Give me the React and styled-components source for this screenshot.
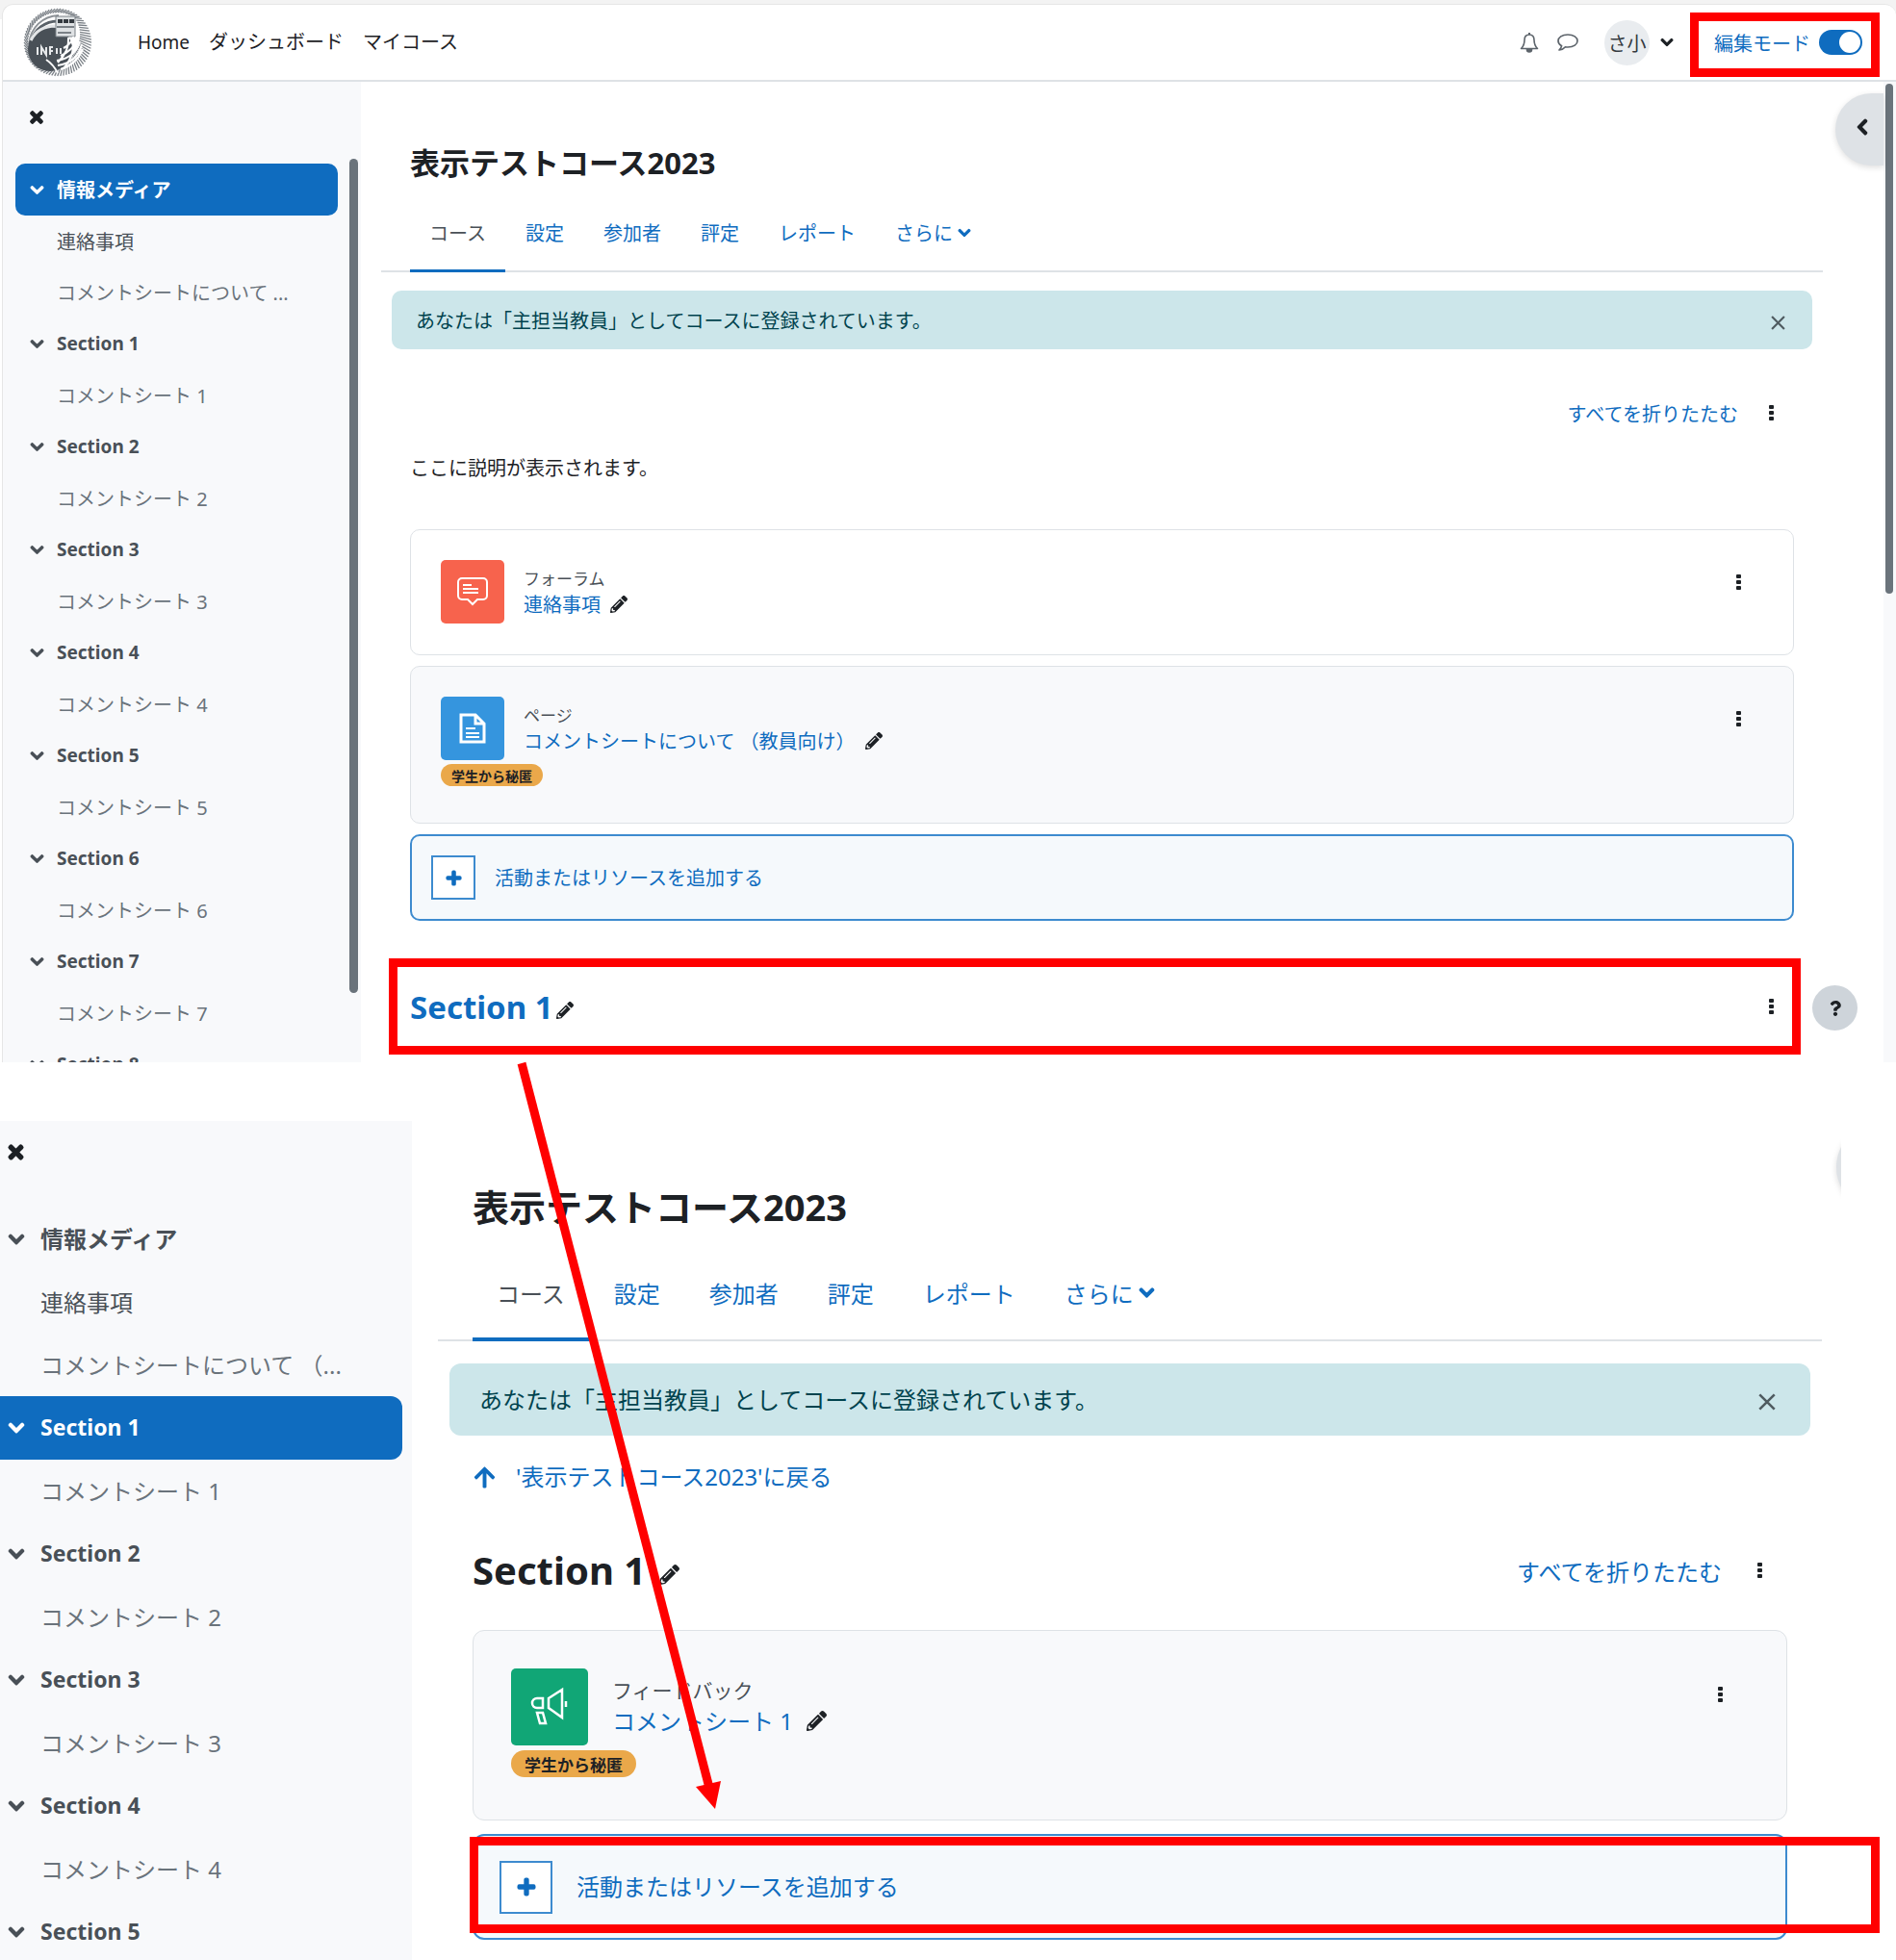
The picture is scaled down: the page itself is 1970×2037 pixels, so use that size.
import React, { useState } from "react";
import styled, { createGlobalStyle, css, ThemeProvider } from "styled-components";
import { FaTimes, FaChevronDown, FaChevronLeft, FaPencilAlt, FaPlus, FaArrowUp, FaQuestion } from "react-icons/fa";

const compact = {
  text: 20, latin: 19, small: 17, badge: 14, title: 31, section: 33, icon: 15, pencil: 19, lift: 1,
  titleTop: 60, titleLine: 48, titleGap: 10,
  tabPad: 20, tabHeight: 80, tabBar: 3, mainLeft: 21, mainRight: 63, bodyPad: 30,
  alertGap: 19, alertSide: 11, alertHeight: 61, alertPad: 25, alertRight: 28,
  cardPad: 31, cardBottom: 32, cardGap: 11, cardMenuPad: 40, menuHeight: 46, tile: 66, tileGap: 20, line: 27,
  badgeHeight: 23, badgePad: 11, badgeTop: 4, pencilGap: 10,
  addHeight: 90, addPad: 20, plus: 46, addGap: 20,
  menuRight: 7, menuGap: 19,
  navWidth: 372, navTop: 85, navClose: 37, navSide: 13, navRight: 24, navIcon: 15, navText: 43,
  rowTitle: 54, rowItem: 53, radius: 10,
};

const large = {
  text: 24, latin: 23, small: 21, badge: 17, title: 38, section: 40, icon: 18, pencil: 22, lift: 3,
  titleTop: 60, titleLine: 58, titleGap: 13,
  tabPad: 25, tabHeight: 98, tabBar: 4, mainLeft: 27, mainRight: 20, bodyPad: 36,
  alertGap: 23, alertSide: 12, alertHeight: 75, alertPad: 31, alertRight: 36,
  cardPad: 39, cardBottom: 38, cardGap: 14, cardMenuPad: 52, menuHeight: 54, tile: 80, tileGap: 25, line: 32,
  badgeHeight: 28, badgePad: 14, badgeTop: 5, pencilGap: 14,
  addHeight: 110, addPad: 26, plus: 55, addGap: 25,
  menuRight: 12, menuGap: 24,
  navWidth: 428, navTop: 90, navClose: 32, navSide: 0, navRight: 10, navIcon: 8, navText: 42,
  rowTitle: 66, rowItem: 65, radius: 12,
};

const px = (key) => ({ theme }) => `${theme[key]}px`;

const heavyIcon = css`
  > svg { stroke-width: 40px; }
`;

const GlobalStyle = createGlobalStyle`
  *, *::before, *::after { box-sizing: border-box; }
  body {
    margin: 0;
    background: #fff;
    color: #1d2125;
    font-family: "Noto Sans", "Noto Sans CJK JP", sans-serif;
  }
  h1, h2, p, ul { margin: 0; padding: 0; }
  ul { list-style: none; }
  a { color: #0f6cbf; text-decoration: none; }
  button { font: inherit; color: inherit; background: none; border: 0; padding: 0; cursor: pointer; }
  svg { display: block; flex: none; overflow: visible; }
`;

const Page = styled.div`
  position: relative;
  overflow: hidden;
`;

const Desktop = styled.div`
  background: linear-gradient(#f3f3f3 0 20px, #fff 20px);
  padding: 4px 0 0 2px;
`;

const Window = styled.section`
  border: solid #e6e6e6;
  border-width: 1px 0 0 1px;
  border-radius: 12px 12px 0 0;
  background: #fff;
  overflow: hidden;
`;

const Header = styled.header`
  display: flex;
  align-items: center;
  height: 80px;
  padding: 0 17px 0 21px;
  border-bottom: 2px solid #dee2e6;
  font-size: 20px;
`;

const Menu = styled.nav`
  display: flex;
  align-items: center;
  gap: 20px;
  margin-left: 47px;
  a { color: #1d2125; line-height: 30px; }
`;

const Latin = styled.span`
  font-size: ${px("latin")};
`;

const Tools = styled.div`
  display: flex;
  align-items: center;
  margin-left: auto;
`;

const ToolButton = styled.button`
  display: flex;
  align-items: center;
  justify-content: center;
  width: 40px;
  height: 40px;
  color: #5d646b;
`;

const UserButton = styled.button`
  display: flex;
  align-items: center;
  gap: 11px;
  margin: 0 17px 0 18px;
  ${heavyIcon}
`;

const Avatar = styled.span`
  display: grid;
  place-items: center;
  width: 47px;
  height: 47px;
  border-radius: 50%;
  background: #e9ecef;
  color: #343a40;
`;

const Callout = styled.span`
  position: absolute;
  inset: ${(p) => p.$inset};
  border: 9px solid #f00;
  pointer-events: none;
  z-index: 3;
`;

const EditMode = styled.div`
  position: relative;
  display: flex;
  align-items: center;
  height: 67px;
  padding: 0 18px 0 25px;
  gap: 9px;
  label { color: #0f6cbf; }
`;

const Switch = styled.input`
  appearance: none;
  width: 45px;
  height: 26px;
  margin: 0;
  border-radius: 13px;
  background: #0f6cbf;
  display: flex;
  align-items: center;
  justify-content: flex-end;
  padding: 2px;
  cursor: pointer;
  &::after {
    content: "";
    width: 22px;
    height: 22px;
    border-radius: 50%;
    background: #fff;
  }
  &:not(:checked) { justify-content: flex-start; background: #8f959e; }
`;

const Columns = styled.div`
  display: flex;
`;

const Sidebar = styled.aside`
  position: relative;
  flex: none;
  width: ${px("navWidth")};
  contain: size;
  overflow: hidden;
  background: #f8f9fb;
  padding: 0 ${px("navRight")} 0 ${px("navSide")};
`;

const CloseRow = styled.div`
  height: ${px("navTop")};
  padding: ${({ theme }) => theme.navClose - 15}px 0 0 ${({ theme }) => theme.navIcon - 2}px;
  button {
    display: flex;
    align-items: center;
    height: 30px;
    ${heavyIcon}
  }
`;

const NavTitle = styled.div`
  display: flex;
  align-items: center;
  height: ${px("rowTitle")};
  padding-left: ${px("navIcon")};
  gap: ${({ theme }) => theme.navText - theme.navIcon - theme.icon}px;
  border-radius: ${({ theme }) => (theme.navSide ? "10px" : "0 12px 12px 0")};
  color: #495057;
  font-weight: 700;
  ${heavyIcon}
  a {
    color: inherit;
    padding-bottom: ${px("lift")};
    font-size: ${({ theme, $latin }) => ($latin ? theme.latin : theme.text)}px;
  }
  ${(p) => p.$active && css`
    background: #0f6cbf;
    color: #fff;
  `}
`;

const NavItem = styled.a`
  display: flex;
  align-items: center;
  height: ${px("rowItem")};
  padding: 0 0 ${px("lift")} ${px("navText")};
  font-size: ${px("text")};
  white-space: nowrap;
  && { color: ${(p) => (p.$dim ? "#6a737b" : "#495057")}; }
`;

const SideThumb = styled.span`
  position: absolute;
  right: 3px;
  top: 80px;
  bottom: 72px;
  width: 9px;
  border-radius: 5px;
  background: #6a737b;
`;

const Main = styled.main`
  position: relative;
  flex: 1;
  min-width: 0;
  padding: ${px("titleTop")} ${px("mainRight")} ${(p) => p.$bottom}px ${px("mainLeft")};
  font-size: ${px("text")};
`;

const Title = styled.h1`
  padding: 0 ${px("bodyPad")};
  margin-bottom: ${px("titleGap")};
  font-size: ${px("title")};
  line-height: ${px("titleLine")};
  font-weight: 700;
`;

const Tabs = styled.nav`
  display: flex;
  gap: 1px;
  height: ${px("tabHeight")};
  padding: 0 ${px("bodyPad")};
  box-shadow: inset 0 -2px #dee2e6;
`;

const Tab = styled.a`
  display: flex;
  align-items: center;
  gap: 5px;
  padding: 0 ${px("tabPad")};
  border-bottom: ${px("tabBar")} solid transparent;
  white-space: nowrap;
  ${heavyIcon}
  ${(p) => p.$active && css`
    color: #495057;
    border-color: #0f6cbf;
  `}
`;

const Alert = styled.div`
  display: flex;
  align-items: center;
  justify-content: space-between;
  height: ${px("alertHeight")};
  margin: ${px("alertGap")} ${px("alertSide")} 0;
  padding: 0 ${px("alertRight")} 0 ${px("alertPad")};
  border-radius: ${px("radius")};
  background: #cce6ea;
  color: #00434e;
  span { padding-bottom: ${px("lift")}; }
  button { color: #4f5b60; padding-top: 5px; }
`;

const Body = styled.div`
  padding: 0 ${px("bodyPad")};
`;

const Actions = styled.div`
  display: flex;
  align-items: center;
  justify-content: flex-end;
  gap: ${px("menuGap")};
  height: 40px;
  padding-right: ${px("menuRight")};
  margin-left: auto;
`;

const ActionBar = styled.div`
  margin-top: 46px;
`;

const Description = styled.p`
  margin: 23px 0 48px;
  line-height: 30px;
`;

const BackLink = styled.a`
  display: inline-flex;
  align-items: center;
  gap: 20px;
  height: 40px;
  margin: 23px 0 47px;
  span { padding-bottom: ${px("lift")}; }
`;

const List = styled.div`
  display: grid;
  gap: ${px("cardGap")};
`;

const Card = styled.article`
  display: flex;
  justify-content: space-between;
  align-items: flex-start;
  padding: ${px("cardPad")} ${px("cardMenuPad")} ${px("cardBottom")} ${px("cardPad")};
  border: 1px solid #dee2e6;
  border-radius: ${px("radius")};
  background: ${(p) => (p.$hidden ? "#f8f9fb" : "#fff")};
`;

const CardHead = styled.div`
  display: flex;
  align-items: center;
  gap: ${px("tileGap")};
`;

const CardText = styled.div`
  padding-bottom: ${px("lift")};
`;

const Tile = styled.span`
  display: grid;
  place-items: center;
  width: ${px("tile")};
  height: ${px("tile")};
  border-radius: 5px;
  background: ${(p) => p.$color};
`;

const Kind = styled.div`
  font-size: ${px("small")};
  line-height: ${px("line")};
  color: #495057;
`;

const Name = styled.div`
  display: flex;
  align-items: center;
  gap: ${px("pencilGap")};
  line-height: ${px("line")};
`;

const Badge = styled.span`
  display: flex;
  align-items: center;
  width: max-content;
  height: ${px("badgeHeight")};
  margin: ${px("badgeTop")} 0 6px;
  padding: 0 ${px("badgePad")};
  border-radius: 14px;
  background: #eaa84a;
  font-size: ${px("badge")};
  font-weight: 700;
`;

const Kebab = styled.button`
  display: grid;
  place-items: center;
  width: 32px;
  height: ${px("menuHeight")};
  color: #1d2125;
`;

const AddFrame = styled.div`
  position: relative;
`;

const AddButton = styled.button`
  display: flex;
  align-items: center;
  width: 100%;
  height: ${px("addHeight")};
  padding-left: ${px("addPad")};
  gap: ${px("addGap")};
  border: 2px solid #3d8bcf;
  border-radius: ${px("radius")};
  background: #f5f9fc;
  color: #0f6cbf;
`;

const AddLabel = styled.span`
  padding-bottom: ${px("lift")};
`;

const PlusBox = styled.span`
  display: grid;
  place-items: center;
  width: ${px("plus")};
  height: ${px("plus")};
  border: 2px solid #3d8bcf;
  background: #fff;
  ${heavyIcon}
`;

const SectionRow = styled.div`
  position: relative;
  display: flex;
  align-items: center;
  height: ${(p) => p.$height}px;
  margin: ${(p) => p.$margin};
  h2 { font-size: ${px("section")}; line-height: 1; }
`;

const PencilButton = styled.button`
  margin: 8px 0 0 ${(p) => p.$gap || 0}px;
`;

const DrawerToggle = styled.button`
  position: absolute;
  top: 12px;
  right: 0;
  display: grid;
  place-items: center;
  width: 50px;
  height: 75px;
  border-radius: 38px 0 0 38px;
  background: #dee2e6;
  box-shadow: 0 2px 6px #0002;
  && { padding: 0 0 5px 6px; }
  ${heavyIcon}
`;

const DrawerEdge = styled.span`
  position: absolute;
  top: 0;
  right: 0;
  width: 12px;
  height: 96px;
  overflow: hidden;
  &::after {
    content: "";
    position: absolute;
    left: 7px;
    top: 2px;
    width: 92px;
    height: 92px;
    border-radius: 50%;
    background: #dee2e6;
    box-shadow: 0 2px 6px #0002;
  }
`;

const Help = styled.button`
  position: absolute;
  right: 27px;
  bottom: 33px;
  display: grid;
  place-items: center;
  width: 47px;
  height: 47px;
  border-radius: 50%;
  background: #ced4da;
`;

const PageScroll = styled.div`
  width: 13px;
  padding: 2px 3px 0 2px;
  background: #f8f9fb;
  &::before {
    content: "";
    display: block;
    width: 8px;
    height: 530px;
    border-radius: 4px;
    background: #6a737b;
  }
`;

const LowerShot = styled.section`
  display: flex;
  margin: 61px 57px 0 0;
`;

const Arrow = styled.svg`
  position: absolute;
  left: 530px;
  top: 1096px;
  z-index: 4;
  pointer-events: none;
`;

function Logo() {
  const rays = Array.from({ length: 72 }, (_, i) => {
    const a = (i / 72) * Math.PI * 2;
    const inner = 31 - 11 * Math.max(0, Math.cos(a - 0.6));
    return [
      36 + Math.cos(a) * inner, 36 + Math.sin(a) * inner,
      36 + Math.cos(a + 0.18) * 35, 36 + Math.sin(a + 0.18) * 35,
    ];
  });
  return (
    <svg width="72" height="72" viewBox="0 0 72 72" aria-label="ロゴ" role="img">
      {rays.map(([a, b, c, d], i) => (
        <line key={i} x1={a} y1={b} x2={c} y2={d} stroke="#7b8187" strokeWidth="1.3" />
      ))}
      <path d="M6 38C8 20 20 9 37 8" stroke="#8d9297" strokeWidth="2" fill="none" />
      <path d="M8 36C12 22 23 14 36 14" stroke="#5a6168" strokeWidth="3" fill="none" />
      <circle cx="28" cy="43" r="23" fill="#495057" />
      <path d="M8 34C13 24 22 19 34 19" stroke="#e3e5e7" strokeWidth="3" fill="none" />
      <path d="M34 9h20v21H34z" fill="#dfe2e4" stroke="#7b8187" />
      <path d="M36 12h5v4h-5zM42 12h5v4h-5zM48 12h5v4h-5z" fill="#343a40" />
      <path d="M35 20h18M36 26h14" stroke="#7b8187" strokeWidth="2" />
      <path d="M53 31c-3 5-7 9-11 11M56 33c-3 8-10 14-17 17M59 35c-3 11-12 18-24 20M61 38c-3 13-13 20-25 22M62 43c-5 12-13 18-23 21M47 31c1 9-3 18-11 26M52 30c2 12-1 22-9 32" stroke="#fff" strokeWidth="2" fill="none" />
      <path d="M15 41v8M19 49v-8l5 8v-8M28 49v-8h3M28 45h3M35 42v6M39 42v6" stroke="#e6e8ea" strokeWidth="2" fill="none" />
      <path d="M24 54c6 4 9 8 12 14" stroke="#fff" strokeWidth="2" fill="none" />
    </svg>
  );
}

const Bell = () => (
  <svg width="20" height="23" viewBox="0 0 20 23" fill="none" stroke="currentColor" strokeWidth="1.6">
    <path d="M10 3C6.500 3 5 5.500 5 8.500C5 13 3.500 15.500 1.500 17.500H18.500C16.500 15.500 15 13 15 8.500C15 5.500 13.500 3 10 3Z" strokeLinejoin="round" />
    <path d="M10 1v2" strokeWidth="2" />
    <path d="M7.500 18.500a2.500 2.500 0 0 0 5 0z" fill="currentColor" />
  </svg>
);

const Bubble = () => (
  <svg width="24" height="20" viewBox="0 0 24 20" fill="none" stroke="currentColor" strokeWidth="1.700" strokeLinejoin="round">
    <path d="M12 2C6 2 2 4.800 2 8.500c0 2.200 1.400 4 3.600 5.200C5.300 15.500 4.500 16.600 3 18c2.800-.3 5-1.400 6.500-3.200 .8.100 1.600.200 2.500.2 6 0 10-2.800 10-6.500S18 2 12 2z" />
  </svg>
);

const Dots = () => (
  <svg width="6" height="18" viewBox="0 0 6 18" fill="currentColor">
    <rect y="1" width="5" height="4" rx="1" />
    <rect y="7" width="5" height="4" rx="1" />
    <rect y="13" width="5" height="4" rx="1" />
  </svg>
);

const ThinCross = ({ size }) => (
  <svg width={size} height={size} viewBox="0 0 14 14" stroke="currentColor" strokeWidth="2">
    <path d="M1 1l12 12M13 1L1 13" />
  </svg>
);

const ForumIcon = () => (
  <svg width="34" height="34" viewBox="0 0 34 34" fill="none" stroke="#fff" strokeWidth="2">
    <path d="M6 3h22a4 4 0 0 1 4 4v14a4 4 0 0 1-4 4h-6l-5 5-5-5H6a4 4 0 0 1-4-4V7a4 4 0 0 1 4-4z" />
    <path d="M7 10h9M7 14h16M7 18h16" />
  </svg>
);

const PageIcon = () => (
  <svg width="28" height="34" viewBox="0 0 28 34" fill="none" stroke="#fff" strokeWidth="3">
    <path d="M2 3h15l9 9v19H2zM17 3v9h9" />
    <path d="M7 17h10M7 22h14M7 26h14" strokeWidth="2" />
  </svg>
);

const FeedbackIcon = () => (
  <svg width="42" height="42" viewBox="0 0 42 42" fill="none" stroke="#fff" strokeWidth="2.500">
    <path d="M14 12H8a5 5 0 0 0 0 10h6zM20 12L34 3v29L20 22zM8 27h6l3 11h-6z" />
    <path d="M38 15v6" />
  </svg>
);

const sectionsTo = (last) =>
  Array.from({ length: last }, (_, i) => ({
    title: `Section ${i + 1}`,
    items: i + 1 < last ? [`コメントシート ${i + 1}`] : [],
  }));

function CourseIndex({ groups, active, scroll, theme }) {
  return (
    <Sidebar aria-label="コースインデックス">
      <CloseRow>
        <button aria-label="閉じる"><FaTimes size={theme.icon + 3} /></button>
      </CloseRow>
      <ul>
        {groups.map((g) => (
          <li key={g.title}>
            <NavTitle $active={g.title === active} $latin={g.title.startsWith("Section")}>
              <FaChevronDown size={theme.icon} />
              <a href="#section">{g.title}</a>
            </NavTitle>
            {g.items.map((t) => (
              <NavItem key={t} href="#item" $dim={t.startsWith("コメント")}>{t}</NavItem>
            ))}
          </li>
        ))}
      </ul>
      {scroll && <SideThumb />}
    </Sidebar>
  );
}

function CourseTop({ theme }) {
  return (
    <>
      <Title>表示テストコース2023</Title>
      <Tabs>
        <Tab href="#course" $active>コース</Tab>
        <Tab href="#settings">設定</Tab>
        <Tab href="#users">参加者</Tab>
        <Tab href="#grades">評定</Tab>
        <Tab href="#reports">レポート</Tab>
        <Tab href="#more">さらに<FaChevronDown size={theme.icon - 1} /></Tab>
      </Tabs>
      <Alert role="status">
        <span>あなたは「主担当教員」としてコースに登録されています。</span>
        <button aria-label="閉じる"><ThinCross size={theme.icon} /></button>
      </Alert>
    </>
  );
}

function Activity({ kind, name, color, icon, hidden, theme }) {
  return (
    <Card $hidden={hidden}>
      <div>
        <CardHead>
          <Tile $color={color}>{icon}</Tile>
          <CardText>
            <Kind>{kind}</Kind>
            <Name>
              <a href="#activity">{name}</a>
              <button aria-label="名称を編集する"><FaPencilAlt size={theme.pencil - 1} /></button>
            </Name>
          </CardText>
        </CardHead>
        {hidden && <Badge>学生から秘匿</Badge>}
      </div>
      <Kebab aria-label="編集"><Dots /></Kebab>
    </Card>
  );
}

function AddActivity({ theme, callout }) {
  return (
    <AddFrame>
      <AddButton>
        <PlusBox><FaPlus size={theme.icon + 2} /></PlusBox>
        <AddLabel>活動またはリソースを追加する</AddLabel>
      </AddButton>
      {callout && <Callout $inset="3px -96px 7px -3px" />}
    </AddFrame>
  );
}

const CollapseActions = () => (
  <Actions>
    <a href="#collapse">すべてを折りたたむ</a>
    <Kebab aria-label="編集"><Dots /></Kebab>
  </Actions>
);

export default function App() {
  const [editing, setEditing] = useState(true);
  return (
    <Page>
      <GlobalStyle />
      <ThemeProvider theme={compact}>
        <Desktop>
          <Window>
            <Header>
              <Logo />
              <Menu>
                <a href="#home"><Latin>Home</Latin></a>
                <a href="#dashboard">ダッシュボード</a>
                <a href="#courses">マイコース</a>
              </Menu>
              <Tools>
                <ToolButton aria-label="通知"><Bell /></ToolButton>
                <ToolButton aria-label="メッセージ"><Bubble /></ToolButton>
                <UserButton>
                  <Avatar>さ小</Avatar>
                  <FaChevronDown size={14} />
                </UserButton>
                <EditMode>
                  <label htmlFor="edit-mode">編集モード</label>
                  <Switch id="edit-mode" type="checkbox" checked={editing} onChange={(e) => setEditing(e.target.checked)} />
                  <Callout $inset="2px 0 -2px" />
                </EditMode>
              </Tools>
            </Header>
            <Columns>
              <CourseIndex
                theme={compact}
                scroll
                active="情報メディア"
                groups={[{ title: "情報メディア", items: ["連絡事項", "コメントシートについて ..."] }, ...sectionsTo(8)]}
              />
              <Main $bottom={17}>
                <CourseTop theme={compact} />
                <Body>
                  <ActionBar><CollapseActions /></ActionBar>
                  <Description>ここに説明が表示されます。</Description>
                  <List>
                    <Activity theme={compact} kind="フォーラム" name="連絡事項" color="#f7634d" icon={<ForumIcon />} />
                    <Activity theme={compact} kind="ページ" name="コメントシートについて （教員向け）" color="#3595de" icon={<PageIcon />} hidden />
                    <AddActivity theme={compact} />
                  </List>
                  <SectionRow $height={82} $margin="48px 0 0">
                    <h2><a href="#section-1">Section 1</a></h2>
                    <PencilButton $gap={3} aria-label="名称を編集する"><FaPencilAlt size={18} /></PencilButton>
                    <Actions><Kebab aria-label="編集"><Dots /></Kebab></Actions>
                    <Callout $inset="-9px -7px -9px -22px" />
                  </SectionRow>
                </Body>
                <DrawerToggle aria-label="ブロックドロワを開く"><FaChevronLeft size={18} /></DrawerToggle>
                <Help aria-label="ヘルプ"><FaQuestion size={16} /></Help>
              </Main>
              <PageScroll />
            </Columns>
          </Window>
        </Desktop>
      </ThemeProvider>
      <ThemeProvider theme={large}>
        <LowerShot>
          <CourseIndex
            theme={large}
            active="Section 1"
            groups={[{ title: "情報メディア", items: ["連絡事項", "コメントシートについて （..."] }, ...sectionsTo(5)]}
          />
          <Main $bottom={21}>
            <CourseTop theme={large} />
            <Body>
              <BackLink href="#back"><FaArrowUp size={25} /><span>'表示テストコース2023'に戻る</span></BackLink>
              <SectionRow $height={60} $margin="0 0 32px">
                <h2>Section 1</h2>
                <PencilButton $gap={14} aria-label="名称を編集する"><FaPencilAlt size={21} /></PencilButton>
                <CollapseActions />
              </SectionRow>
              <List>
                <Activity theme={large} kind="フィードバック" name="コメントシート 1" color="#11a676" icon={<FeedbackIcon />} hidden />
                <AddActivity theme={large} callout />
              </List>
            </Body>
            <DrawerEdge />
          </Main>
        </LowerShot>
      </ThemeProvider>
      <Arrow width="230" height="790" viewBox="0 0 230 790" aria-hidden="true">
        <path d="M12 9L207 762" stroke="#f00" strokeWidth="9" />
        <path d="M193 761L219 755L213 784Z" fill="#f00" />
      </Arrow>
    </Page>
  );
}
